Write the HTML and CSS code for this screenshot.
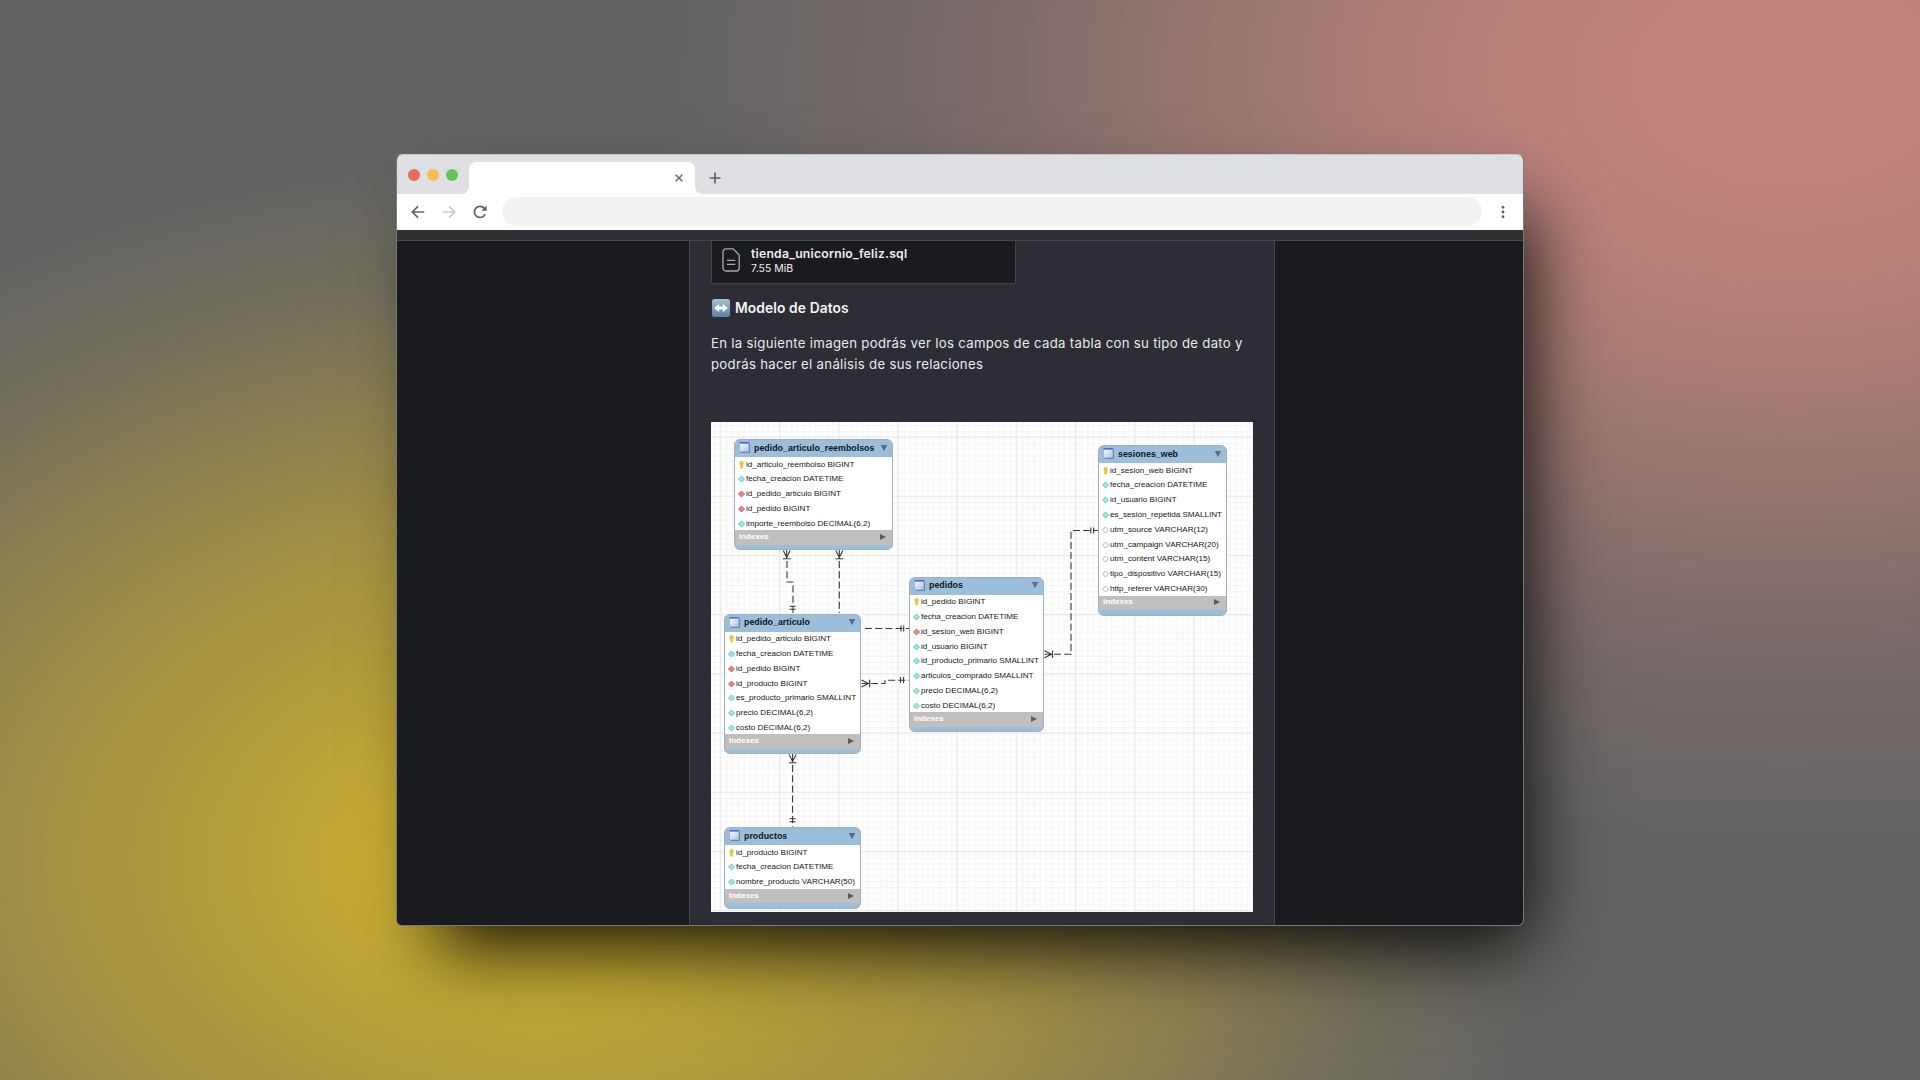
FILE: index.html
```
<!DOCTYPE html>
<html lang="es">
<head>
<meta charset="utf-8">
<title>Modelo de Datos</title>
<link rel="stylesheet" href="styles.css">
</head>
<body>
<svg class="defs" width="0" height="0" aria-hidden="true">
  <linearGradient id="tbl" x1="0" y1="0" x2="1" y2="1"><stop offset="0" stop-color="#fff"/><stop offset="1" stop-color="#a9bdf0"/></linearGradient>
  <linearGradient id="emo" x1="0" y1="0" x2="0" y2="1"><stop offset="0" stop-color="#a9c0d2"/><stop offset="1" stop-color="#5583a5"/></linearGradient>
  <symbol id="table" viewBox="0 0 12 12"><path d="M2 11.5h9.5V2" fill="none" stroke="#77787f" stroke-width="1"/><rect x=".9" y=".9" width="9.8" height="9.8" fill="url(#tbl)" stroke="#8fa2d8" stroke-width=".6"/><path d="M.5 1h10.6" stroke="#3050e8" stroke-width="1.2"/></symbol>
  <symbol id="key" viewBox="0 0 7 8"><path d="M3.5.3a2 2 0 0 1 1.2 3.6v2.6l-1.2 1.2-1-1V3.9A2 2 0 0 1 3.5.3z" fill="#f5c82c" stroke="#d9a520" stroke-width=".4"/></symbol>
  <symbol id="col" viewBox="0 0 7 8"><path d="M3.5 1l3 3-3 3-3-3z" fill="#8feee2" stroke="#62b8b2" stroke-width=".8"/></symbol>
  <symbol id="fk" viewBox="0 0 7 8"><path d="M3.5 1l3 3-3 3-3-3z" fill="#e98585" stroke="#b85454" stroke-width=".8"/></symbol>
  <symbol id="nul" viewBox="0 0 7 8"><path d="M3.5 1l3 3-3 3-3-3z" fill="#fff" stroke="#93a5a8" stroke-width=".8"/></symbol>
  <symbol id="down" viewBox="0 0 8 8"><path d="M.8 1h6.4L4 7.2z" fill="#5d6c78"/></symbol>
  <symbol id="right" viewBox="0 0 8 8"><path d="M1 .9v6.2L7 4z" fill="#5c5c5c"/></symbol>
</svg>

<main class="window">
  <div class="tabs">
    <div class="lights"><i class="red"></i><i class="yellow"></i><i class="green"></i></div>
    <div class="tab"><svg width="8" height="8" viewBox="0 0 8 8"><path d="M.7.7l6.6 6.6M7.3.7L.7 7.3" stroke="#616366" stroke-width="1.4"/></svg></div>
    <svg class="plus" width="12" height="12" viewBox="0 0 12 12"><path d="M6 .5v11M.5 6h11" stroke="#5c5e61" stroke-width="1.6"/></svg>
  </div>
  <div class="toolbar">
    <svg class="nav" width="14" height="14" viewBox="0 0 14 14" fill="none" stroke="#626467" stroke-width="1.7"><path d="M13.3 7H1.5M7 1.3L1.3 7 7 12.7"/></svg>
    <svg class="nav" width="14" height="14" viewBox="0 0 14 14" fill="none" stroke="#cbcccd" stroke-width="1.7"><path d="M.7 7h11.8M7 1.3L12.7 7 7 12.7"/></svg>
    <svg class="nav" width="14" height="14" viewBox="0 0 14 14"><path d="M12.1 9.2A5.6 5.6 0 1 1 11.3 3.3" fill="none" stroke="#5f6164" stroke-width="1.7"/><path d="M13.6.6v5.2H8.4z" fill="#5f6164"/></svg>
    <div class="address"></div>
    <svg class="kebab" width="4" height="14" viewBox="0 0 4 14" fill="#5d5f62"><circle cx="2" cy="2.3" r="1.4"/><circle cx="2" cy="7" r="1.4"/><circle cx="2" cy="11.7" r="1.4"/></svg>
  </div>
  <div class="topline"></div>
  <div class="page">
    <article class="column">
      <div class="file">
        <svg width="18" height="24" viewBox="0 0 18 24" fill="none" stroke="#a9aaad" stroke-width="1.3"><path d="M4 .9h7.2l6 6.2V20a3 3 0 0 1-3 3H4a3 3 0 0 1-3-3V4A3 3 0 0 1 4 .9z"/><path d="M5 12.4h8.3M5 16.3h8.3"/></svg>
        <div><div class="filename">tienda_unicornio_feliz.sql</div><div class="filesize">7.55 MiB</div></div>
      </div>
      <h2><svg width="18" height="18" viewBox="0 0 18 18"><rect width="18" height="18" rx="2.5" fill="url(#emo)"/><path d="M2.2 9l5-4.3v2.9h3.6V4.7l5 4.3-5 4.3v-2.9H7.2v2.9z" fill="#fff"/></svg><span>Modelo de Datos</span></h2>
      <p>En la siguiente imagen podrás ver los campos de cada tabla con su tipo de dato y<br>podrás hacer el análisis de sus relaciones</p>
      <div class="diagram">
        <svg class="links" width="542" height="490" viewBox="711 422 542 490">
          <defs>
            <pattern id="minor" x="720.3" y="437" width="5.92" height="5.92" patternUnits="userSpaceOnUse"><path d="M0 .5H5.92M.5 0V5.92" stroke="#f4f5f5" stroke-width="1"/></pattern>
            <pattern id="major" x="719.8" y="436.5" width="59.2" height="59.2" patternUnits="userSpaceOnUse"><path d="M0 .5H59.2M.5 0V59.2" stroke="#e6e9ea" stroke-width="1"/></pattern>
          </defs>
          <rect x="711" y="422" width="542" height="490" fill="url(#minor)"/>
          <rect x="711" y="422" width="542" height="490" fill="url(#major)"/>
          <g fill="none" stroke="#383838" stroke-width="1.1">
            <g stroke-dasharray="7 3.2">
              <path d="M787 561v21h6v31"/><path d="M839.3 561v52"/><path d="M865 628.5h44"/>
              <path d="M871 683.5h14v-3.3h24"/><path d="M792.6 765v62"/><path d="M1054 654.3h17V530.5h27"/>
            </g>
            <path d="M783.3 550.5l3.4 7 3.4-7M786.7 550v8M783 558.7h7.6M789.6 606.3h6M789.6 609.2h6"/>
            <path d="M835.8 550.5l3.5 7 3.5-7M839.3 550v8M835.5 558.7h7.6M901 625.4v6M903.7 625.4v6"/>
            <path d="M861.5 680l7 3.5-7 3.5M861.5 683.5h7M869.7 679.7v7.6M900.5 677v6M903.5 677v6"/>
            <path d="M789.1 754.5l3.5 7 3.5-7M792.6 754v8M788.8 762.8h7.6M789.6 818.8h6M789.6 821.7h6"/>
            <path d="M1044.5 650.8l7 3.5-7 3.5M1044.5 654.3h7M1052.5 650.5v7.6M1090.8 527.5v6M1093.6 527.5v6"/>
          </g>
        </svg>

        <section class="entity reembolsos">
          <header><svg><use href="#table"/></svg><b>pedido_articulo_reembolsos</b><svg class="arrow"><use href="#down"/></svg></header>
          <ul>
            <li><svg><use href="#key"/></svg>id_articulo_reembolso BIGINT</li>
            <li><svg><use href="#col"/></svg>fecha_creacion DATETIME</li>
            <li><svg><use href="#fk"/></svg>id_pedido_articulo BIGINT</li>
            <li><svg><use href="#fk"/></svg>id_pedido BIGINT</li>
            <li><svg><use href="#col"/></svg>importe_reembolso DECIMAL(6,2)</li>
          </ul>
          <footer>Indexes<svg class="arrow"><use href="#right"/></svg></footer>
        </section>

        <section class="entity articulo">
          <header><svg><use href="#table"/></svg><b>pedido_articulo</b><svg class="arrow"><use href="#down"/></svg></header>
          <ul>
            <li><svg><use href="#key"/></svg>id_pedido_articulo BIGINT</li>
            <li><svg><use href="#col"/></svg>fecha_creacion DATETIME</li>
            <li><svg><use href="#fk"/></svg>id_pedido BIGINT</li>
            <li><svg><use href="#fk"/></svg>id_producto BIGINT</li>
            <li><svg><use href="#col"/></svg>es_producto_primario SMALLINT</li>
            <li><svg><use href="#col"/></svg>precio DECIMAL(6,2)</li>
            <li><svg><use href="#col"/></svg>costo DECIMAL(6,2)</li>
          </ul>
          <footer>Indexes<svg class="arrow"><use href="#right"/></svg></footer>
        </section>

        <section class="entity productos">
          <header><svg><use href="#table"/></svg><b>productos</b><svg class="arrow"><use href="#down"/></svg></header>
          <ul>
            <li><svg><use href="#key"/></svg>id_producto BIGINT</li>
            <li><svg><use href="#col"/></svg>fecha_creacion DATETIME</li>
            <li><svg><use href="#col"/></svg>nombre_producto VARCHAR(50)</li>
          </ul>
          <footer>Indexes<svg class="arrow"><use href="#right"/></svg></footer>
        </section>

        <section class="entity pedidos">
          <header><svg><use href="#table"/></svg><b>pedidos</b><svg class="arrow"><use href="#down"/></svg></header>
          <ul>
            <li><svg><use href="#key"/></svg>id_pedido BIGINT</li>
            <li><svg><use href="#col"/></svg>fecha_creacion DATETIME</li>
            <li><svg><use href="#fk"/></svg>id_sesion_web BIGINT</li>
            <li><svg><use href="#col"/></svg>id_usuario BIGINT</li>
            <li><svg><use href="#col"/></svg>id_producto_primario SMALLINT</li>
            <li><svg><use href="#col"/></svg>articulos_comprado SMALLINT</li>
            <li><svg><use href="#col"/></svg>precio DECIMAL(6,2)</li>
            <li><svg><use href="#col"/></svg>costo DECIMAL(6,2)</li>
          </ul>
          <footer>Indexes<svg class="arrow"><use href="#right"/></svg></footer>
        </section>

        <section class="entity sesiones">
          <header><svg><use href="#table"/></svg><b>sesiones_web</b><svg class="arrow"><use href="#down"/></svg></header>
          <ul>
            <li><svg><use href="#key"/></svg>id_sesion_web BIGINT</li>
            <li><svg><use href="#col"/></svg>fecha_creacion DATETIME</li>
            <li><svg><use href="#col"/></svg>id_usuario BIGINT</li>
            <li><svg><use href="#col"/></svg>es_sesion_repetida SMALLINT</li>
            <li><svg><use href="#nul"/></svg>utm_source VARCHAR(12)</li>
            <li><svg><use href="#nul"/></svg>utm_campaign VARCHAR(20)</li>
            <li><svg><use href="#nul"/></svg>utm_content VARCHAR(15)</li>
            <li><svg><use href="#nul"/></svg>tipo_dispositivo VARCHAR(15)</li>
            <li><svg><use href="#nul"/></svg>http_referer VARCHAR(30)</li>
          </ul>
          <footer>Indexes<svg class="arrow"><use href="#right"/></svg></footer>
        </section>
      </div>
    </article>
  </div>
</main>
</body>
</html>
```
FILE: styles.css
```
* { box-sizing: border-box; }
body {
  margin: 0;
  width: 1920px;
  height: 1080px;
  overflow: hidden;
  padding: 154px 0 0 396px;
  font-family: Inter, "Liberation Sans", sans-serif;
  background:
    radial-gradient(ellipse 1130px 770px at 1790px 80px, #c1847c 0%, #c1847c 12%, rgba(193,132,124,.92) 24%, rgba(193,132,124,.72) 41%, rgba(193,132,124,.45) 58%, rgba(193,132,124,.17) 78%, rgba(193,132,124,0) 100%),
    radial-gradient(ellipse 1020px 700px at 540px 860px, #c9ad30 0%, #c9ad33 14%, rgba(199,171,49,.82) 30%, rgba(199,171,51,.62) 50%, rgba(199,171,51,.4) 66%, rgba(199,171,51,.14) 84%, rgba(199,171,51,0) 100%),
    #636363;
}
.defs { position: absolute; }
svg { display: block; flex: none; }
.window {
  width: 1128px;
  height: 772px;
  border: 1px solid #77787a;
  border-top-color: #c4c5c6;
  border-radius: 6px;
  overflow: hidden;
  background: #1a1b1f;
  box-shadow: 22px 40px 70px -18px rgba(0,0,0,.9);
}
.tabs { display: flex; height: 39px; background: #dfe0e3; padding-left: 11px; }
.lights { display: flex; gap: 7px; padding-top: 14px; width: 61px; }
.lights i { width: 12px; height: 12px; border-radius: 50%; }
.red { background: #ed6a5e; }
.yellow { background: #f5bf4f; }
.green { background: #61c554; }
.tab {
  position: relative;
  width: 226px;
  margin-top: 7px;
  padding-right: 12px;
  display: flex;
  align-items: center;
  justify-content: flex-end;
  background: #fff;
  border-radius: 7px 7px 0 0;
}
.tab::before, .tab::after {
  content: "";
  position: absolute;
  bottom: 0;
  width: 7px;
  height: 7px;
}
.tab::before { left: -7px; background: radial-gradient(circle at 0 0, transparent 6.5px, #fff 7px); }
.tab::after { right: -7px; background: radial-gradient(circle at 100% 0, transparent 6.5px, #fff 7px); }
.plus { margin: 17px 0 0 14px; }
.toolbar { display: flex; align-items: center; height: 36px; background: #fff; padding: 0 18px 1px 14px; }
.nav { margin-right: 17px; }
.address { flex: 1; height: 29px; border-radius: 15px; background: #f1f3f4; margin: 0 19px 0 -2px; }
.topline { height: 11px; background: #2f3034; border-bottom: 1px solid #47484c; }
.page { display: flex; height: 684px; padding-left: 292px; }
.column { width: 586px; background: #2d2e35; border: solid #45464b; border-width: 0 1px; padding: 0 20px 0 21px; }
.file {
  width: 305px;
  height: 43px;
  background: #1a1b1f;
  border: 1px solid #44454b;
  border-top: 0;
  border-radius: 0 0 2px 2px;
  display: flex;
  gap: 11px;
  padding: 7px 0 0 10px;
  color: #f0f0f1;
}
.file > div { margin-top: -2px; }
.filename { font-size: 12.2px; line-height: 16px; font-weight: 600; letter-spacing: .24px; }
.filesize { font-size: 10.5px; line-height: 14px; }
h2 { display: flex; gap: 5px; align-items: center; height: 20px; margin: 14px 0 0 1px; font-size: 13.8px; font-weight: 600; letter-spacing: .1px; color: #f4f4f5; }
p { margin: 15px 0 0; height: 42px; font-size: 13.2px; line-height: 21px; letter-spacing: .3px; color: #e9e9eb; white-space: nowrap; }
.diagram { position: relative; width: 542px; height: 490px; margin-top: 47px; background: #fefefe; overflow: hidden; }
.entity {
  position: absolute;
  border-radius: 6px;
  background: #9bbfdb;
  border: 1px solid #a3b0bb;
  font: 8.1px/14px "Liberation Sans", Arial, sans-serif;
  color: #161616;
  overflow: hidden;
}
.reembolsos { left: 23px; top: 17px; width: 158.5px; height: 111px; }
.articulo { left: 13px; top: 191.5px; width: 137px; height: 140.5px; }
.productos { left: 13px; top: 405px; width: 136.5px; height: 82px; }
.pedidos { left: 198px; top: 154.5px; width: 135px; height: 155.5px; }
.sesiones { left: 387px; top: 23px; width: 129px; height: 171px; }
.entity header { display: flex; align-items: center; height: 17.2px; padding: 0 4px 1.4px; gap: 4px; }
.entity header svg { width: 11px; height: 11px; }
.entity b { flex: 1; font-size: 8.85px; color: #0e151b; }
.entity ul { margin: 0; padding: 0; list-style: none; display: grid; gap: .8px; background: #fff; }
.entity li { display: flex; align-items: center; height: 14px; gap: 1.5px; padding: 1px 0 0 2.5px; white-space: nowrap; }
.entity li svg { width: 7px; height: 8px; }
.entity footer { display: flex; align-items: center; justify-content: space-between; height: 14.5px; background: #bfbfbf; color: #fff; font-weight: 700; padding: 0 5px 1px 4px; font-size: 8px; }
.entity header .arrow, .entity .arrow { width: 8px; height: 8px; }
```
